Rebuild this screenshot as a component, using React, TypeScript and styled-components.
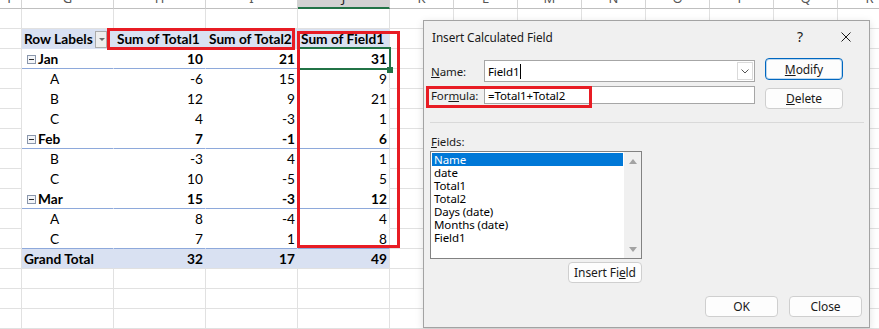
import React from "react";
import styled, { createGlobalStyle } from "styled-components";

const GlobalStyle = createGlobalStyle`
  html, body { margin: 0; padding: 0; background: #ffffff; }
  body { overflow: hidden; }
  * { box-sizing: border-box; }
`;

const GRID = "#E1E1E1";
const PIVOT_BG = "#D9E1F2";
const PIVOT_LINE = "#8EA9DB";
const RED = "#E81C24";

const COLS = [22, 92, 92, 92, 92, 64, 64, 64, 64, 64, 64, 64, 64];
const LETTERS = ["F", "G", "H", "I", "J", "K", "L", "M", "N", "O", "P", "Q", "R"];

const Stage = styled.div`
  position: relative;
  width: 879px;
  height: 329px;
  overflow: hidden;
  background: #ffffff;
`;

const Sheet = styled.div`
  display: grid;
  grid-template-columns: ${COLS.map((c) => c + "px").join(" ")};
  grid-auto-rows: 20px;
  margin-top: -11px;
  font-family: Lato, "Liberation Sans", sans-serif;
  font-size: 13.7px;
  color: #000;
`;

const ColHeader = styled.div<{ $selected?: boolean }>`
  display: flex;
  align-items: center;
  justify-content: center;
  font-family: "Noto Sans", sans-serif;
  font-size: 13px;
  line-height: 19px;
  color: ${(p) => (p.$selected ? "#1E1E1E" : "#555")};
  background: ${(p) => (p.$selected ? "#D2D2D2" : "#FFFFFF")};
  border-right: 1px solid #D4D4D4;
  border-bottom: ${(p) => (p.$selected ? "2px solid #217346" : "1px solid #BFBFBF")};
`;

const GridCell = styled.div`
  border-right: 1px solid ${GRID};
  border-bottom: 1px solid ${GRID};
  background: #fff;
`;

type Tone = "header" | "body" | "total";

const PivotCell = styled.div<{
  $tone: Tone;
  $edge?: boolean;
  $lineBelow?: boolean;
  $bold?: boolean;
  $align?: "left" | "right";
  $indent?: number;
}>`
  display: flex;
  align-items: center;
  justify-content: ${(p) => (p.$align === "right" ? "flex-end" : "flex-start")};
  padding: 1px 2px 0 ${(p) => 2 + (p.$indent ?? 0)}px;
  line-height: 18px;
  white-space: nowrap;
  font-weight: ${(p) => (p.$bold ? 700 : 400)};
  background: ${(p) => (p.$tone === "body" ? "#FFFFFF" : PIVOT_BG)};
  border-right: 1px solid
    ${(p) => (p.$edge ? GRID : p.$tone === "body" ? "#FFFFFF" : PIVOT_BG)};
  border-bottom: 1px solid
    ${(p) =>
      p.$lineBelow ? PIVOT_LINE : p.$tone === "total" ? GRID : p.$tone === "header" ? PIVOT_BG : "#FFFFFF"};
`;

const FilterButton = styled.span`
  margin-left: auto;
  margin-right: 4px;
  width: 12px;
  height: 17px;
  border: 1px solid #ABABAB;
  background: #EEEEEE;
  display: flex;
  align-items: center;
  justify-content: center;
  &::after {
    content: "";
    border-left: 3px solid transparent;
    border-right: 3px solid transparent;
    border-top: 3px solid #6B6B6B;
    margin-left: 2px;
  }
`;

const CollapseBox = styled.span`
  width: 9px;
  height: 9px;
  margin: 0 2px 0 3px;
  border: 1px solid #8A97AC;
  background: #F3F5F9;
  display: flex;
  align-items: center;
  justify-content: center;
  &::after {
    content: "";
    width: 5px;
    height: 1px;
    background: #2B2B2B;
  }
`;

const Overlay = styled.div<{ $x: number; $y: number; $w: number; $h: number }>`
  position: absolute;
  left: ${(p) => p.$x}px;
  top: ${(p) => p.$y}px;
  width: ${(p) => p.$w}px;
  height: ${(p) => p.$h}px;
  pointer-events: none;
`;

const RedBox = styled(Overlay)`
  border: 3px solid ${RED};
`;

const Selection = styled(Overlay)`
  border: 2px solid #217346;
  &::after {
    content: "";
    position: absolute;
    right: -4px;
    bottom: -5px;
    width: 6px;
    height: 6px;
    background: #217346;
  }
`;

/* ---------- Dialog ---------- */

const Dialog = styled.div`
  position: absolute;
  left: 423px;
  top: 20px;
  width: 447px;
  height: 308px;
  background: #F0F0F0;
  border: 1px solid #A3A3A3;
  box-shadow: 0 2px 8px rgba(0, 0, 0, 0.12);
  font-family: "Noto Sans", sans-serif;
  font-size: 11.5px;
  letter-spacing: -0.1px;
  color: #000;
  display: flex;
  flex-direction: column;
`;

const TitleBar = styled.div`
  height: 31px;
  display: flex;
  align-items: center;
  flex-shrink: 0;
`;

const Title = styled.div`
  padding-left: 8px;
  flex: 1;
  font-size: 11.8px;
  color: #1A1A1A;
`;

const CaptionButton = styled.div`
  width: 46px;
  height: 31px;
  display: flex;
  align-items: center;
  justify-content: center;
  font-size: 14px;
  color: #1A1A1A;
`;

const Body = styled.div`
  flex: 1;
  display: flex;
  flex-direction: column;
  padding: 0 7px 0 6px;
`;

const Upper = styled.div`
  display: flex;
`;

const FieldCol = styled.div`
  width: 325px;
  padding-top: 8px;
  display: flex;
  flex-direction: column;
  gap: 4px;
`;

const FieldRow = styled.div<{ $h: number }>`
  display: flex;
  align-items: center;
  height: ${(p) => p.$h}px;
`;

const Label = styled.div`
  width: 54px;
  padding-left: 1px;
  color: #1A1A1A;
`;

const TextBox = styled.div`
  width: 271px;
  height: 100%;
  background: #fff;
  border: 1px solid #A6A6A6;
  display: flex;
  align-items: center;
  padding-left: 3px;
`;

const Caret = styled.span`
  display: inline-block;
  width: 1px;
  height: 15px;
  background: #000;
  margin-left: 1px;
`;

const ComboButton = styled.div`
  margin-left: auto;
  margin-right: 1px;
  width: 16px;
  height: 18px;
  border: 1px solid #DADADA;
  background: #FFFFFF;
  display: flex;
  align-items: center;
  justify-content: center;
`;

const ButtonCol = styled.div`
  margin-left: 10px;
  width: 78px;
  padding-top: 6px;
  display: flex;
  flex-direction: column;
  gap: 8px;
`;

const Button = styled.div<{ $w: number; $h: number; $default?: boolean }>`
  width: ${(p) => p.$w}px;
  height: ${(p) => p.$h}px;
  background: #FDFDFD;
  border: 1px solid ${(p) => (p.$default ? "#0067C0" : "#CFCFCF")};
  box-shadow: ${(p) => (p.$default ? "inset 0 0 0 1px rgba(0,103,192,0.25)" : "none")};
  border-radius: 4px;
  display: flex;
  align-items: center;
  justify-content: center;
  font-size: 12px;
  color: #1A1A1A;
`;

const Separator = styled.div`
  margin-top: 13px;
  width: 434px;
  height: 1px;
  background: #D9D9D9;
`;

const FieldsLabel = styled.div`
  margin-top: 11px;
  line-height: 16px;
  padding-left: 1px;
  color: #1A1A1A;
`;

const ListColumn = styled.div`
  width: 212px;
  display: flex;
  flex-direction: column;
  align-items: flex-end;
`;

const ListBox = styled.div`
  margin-top: 1px;
  width: 212px;
  height: 108px;
  background: #fff;
  border: 1px solid #828282;
  display: flex;
`;

const Items = styled.div`
  flex: 1;
  padding: 1px;
`;

const ListItem = styled.div<{ $selected?: boolean }>`
  height: 13px;
  line-height: 13px;
  font-size: 11.5px;
  padding-left: 2px;
  background: ${(p) => (p.$selected ? "#0078D7" : "transparent")};
  color: ${(p) => (p.$selected ? "#FFFFFF" : "#000000")};
`;

const ScrollBar = styled.div`
  width: 17px;
  background: #F0F0F0;
  display: flex;
  flex-direction: column;
  justify-content: space-between;
  align-items: center;
  padding: 7px 0 6px;
`;

const Arrow = styled.span<{ $down?: boolean }>`
  width: 0;
  height: 0;
  border-left: 4px solid transparent;
  border-right: 4px solid transparent;
  ${(p) => (p.$down ? "border-top: 5px solid #A3A3A3;" : "border-bottom: 5px solid #A3A3A3;")}
`;

const InsertRow = styled.div`
  margin-top: 3px;
`;

const Footer = styled.div`
  margin-top: 13px;
  display: flex;
  justify-content: flex-end;
  gap: 11px;
`;

/* ---------- data ---------- */

type PRow = {
  kind: "header" | "group" | "item" | "total";
  label: string;
  values: string[];
  lineBelow?: boolean;
};

const pivot: PRow[] = [
  { kind: "header", label: "Row Labels", values: ["Sum of Total1", "Sum of Total2", "Sum of Field1"] },
  { kind: "group", label: "Jan", values: ["10", "21", "31"], lineBelow: true },
  { kind: "item", label: "A", values: ["-6", "15", "9"] },
  { kind: "item", label: "B", values: ["12", "9", "21"] },
  { kind: "item", label: "C", values: ["4", "-3", "1"] },
  { kind: "group", label: "Feb", values: ["7", "-1", "6"], lineBelow: true },
  { kind: "item", label: "B", values: ["-3", "4", "1"] },
  { kind: "item", label: "C", values: ["10", "-5", "5"] },
  { kind: "group", label: "Mar", values: ["15", "-3", "12"], lineBelow: true },
  { kind: "item", label: "A", values: ["8", "-4", "4"] },
  { kind: "item", label: "C", values: ["7", "1", "8"], lineBelow: true },
  { kind: "total", label: "Grand Total", values: ["32", "17", "49"] },
];

const fields = ["Name", "date", "Total1", "Total2", "Days (date)", "Months (date)", "Field1"];

function PivotRowCells({ row }: { row: PRow }) {
  const tone: Tone = row.kind === "header" ? "header" : row.kind === "total" ? "total" : "body";
  const bold = row.kind !== "item";
  return (
    <>
      <PivotCell $tone={tone} $lineBelow={row.lineBelow} $bold={bold} $indent={row.kind === "item" ? 26 : 0}>
        {row.kind === "group" && <CollapseBox />}
        {row.label}
        {row.kind === "header" && <FilterButton />}
      </PivotCell>
      {row.values.map((v, i) => (
        <PivotCell
          key={i}
          $tone={tone}
          $edge={i === 2}
          $lineBelow={row.lineBelow}
          $bold={bold}
          $align={row.kind === "header" ? "left" : "right"}
          $indent={row.kind === "header" ? 1 : 0}
        >
          {v}
        </PivotCell>
      ))}
    </>
  );
}

function SheetRow({ index }: { index: number }) {
  const p = index >= 1 && index <= 12 ? pivot[index - 1] : null;
  return (
    <>
      <GridCell />
      {p ? <PivotRowCells row={p} /> : [0, 1, 2, 3].map((i) => <GridCell key={i} />)}
      {Array.from({ length: 8 }).map((_, i) => (
        <GridCell key={"k" + i} />
      ))}
    </>
  );
}

export default function App() {
  return (
    <>
      <GlobalStyle />
      <Stage>
        <Sheet>
          {LETTERS.map((l) => (
            <ColHeader key={l} $selected={l === "J"}>
              {l}
            </ColHeader>
          ))}
          {Array.from({ length: 16 }).map((_, r) => (
            <SheetRow key={r} index={r} />
          ))}
        </Sheet>

        <Selection $x={297} $y={47} $w={94} $h={23} />
        <RedBox $x={107} $y={28} $w={188} $h={22} />
        <RedBox $x={297} $y={31} $w={103} $h={217} />

        <Dialog>
          <TitleBar>
            <Title>Insert Calculated Field</Title>
            <CaptionButton>?</CaptionButton>
            <CaptionButton>
              <svg width="10" height="10" viewBox="0 0 10 10">
                <path d="M0.5 0.5 L9.5 9.5 M9.5 0.5 L0.5 9.5" stroke="#1A1A1A" strokeWidth="1" fill="none" />
              </svg>
            </CaptionButton>
          </TitleBar>
          <Body>
            <Upper>
              <FieldCol>
                <FieldRow $h={22}>
                  <Label>
                    <u>N</u>ame:
                  </Label>
                  <TextBox>
                    Field1
                    <Caret />
                    <ComboButton>
                      <svg width="8" height="5" viewBox="0 0 8 5">
                        <path d="M0.5 0.5 L4 4 L7.5 0.5" stroke="#555" strokeWidth="1" fill="none" />
                      </svg>
                    </ComboButton>
                  </TextBox>
                </FieldRow>
                <FieldRow $h={18}>
                  <Label>
                    For<u>m</u>ula:
                  </Label>
                  <TextBox>=Total1+Total2</TextBox>
                </FieldRow>
              </FieldCol>
              <ButtonCol>
                <Button $w={78} $h={22} $default>
                  <span>
                    <u>M</u>odify
                  </span>
                </Button>
                <Button $w={78} $h={21}>
                  <span>
                    <u>D</u>elete
                  </span>
                </Button>
              </ButtonCol>
            </Upper>
            <Separator />
            <FieldsLabel>
              <u>F</u>ields:
            </FieldsLabel>
            <ListColumn>
              <ListBox>
                <Items>
                  {fields.map((f, i) => (
                    <ListItem key={f} $selected={i === 0}>
                      {f}
                    </ListItem>
                  ))}
                </Items>
                <ScrollBar>
                  <Arrow />
                  <Arrow $down />
                </ScrollBar>
              </ListBox>
              <InsertRow>
                <Button $w={74} $h={21}>
                  <span>
                    Insert Fi<u>e</u>ld
                  </span>
                </Button>
              </InsertRow>
            </ListColumn>
            <Footer>
              <Button $w={73} $h={21}>OK</Button>
              <Button $w={73} $h={21}>Close</Button>
            </Footer>
          </Body>
        </Dialog>
        <RedBox $x={426} $y={86} $w={166} $h={22} />
      </Stage>
    </>
  );
}
